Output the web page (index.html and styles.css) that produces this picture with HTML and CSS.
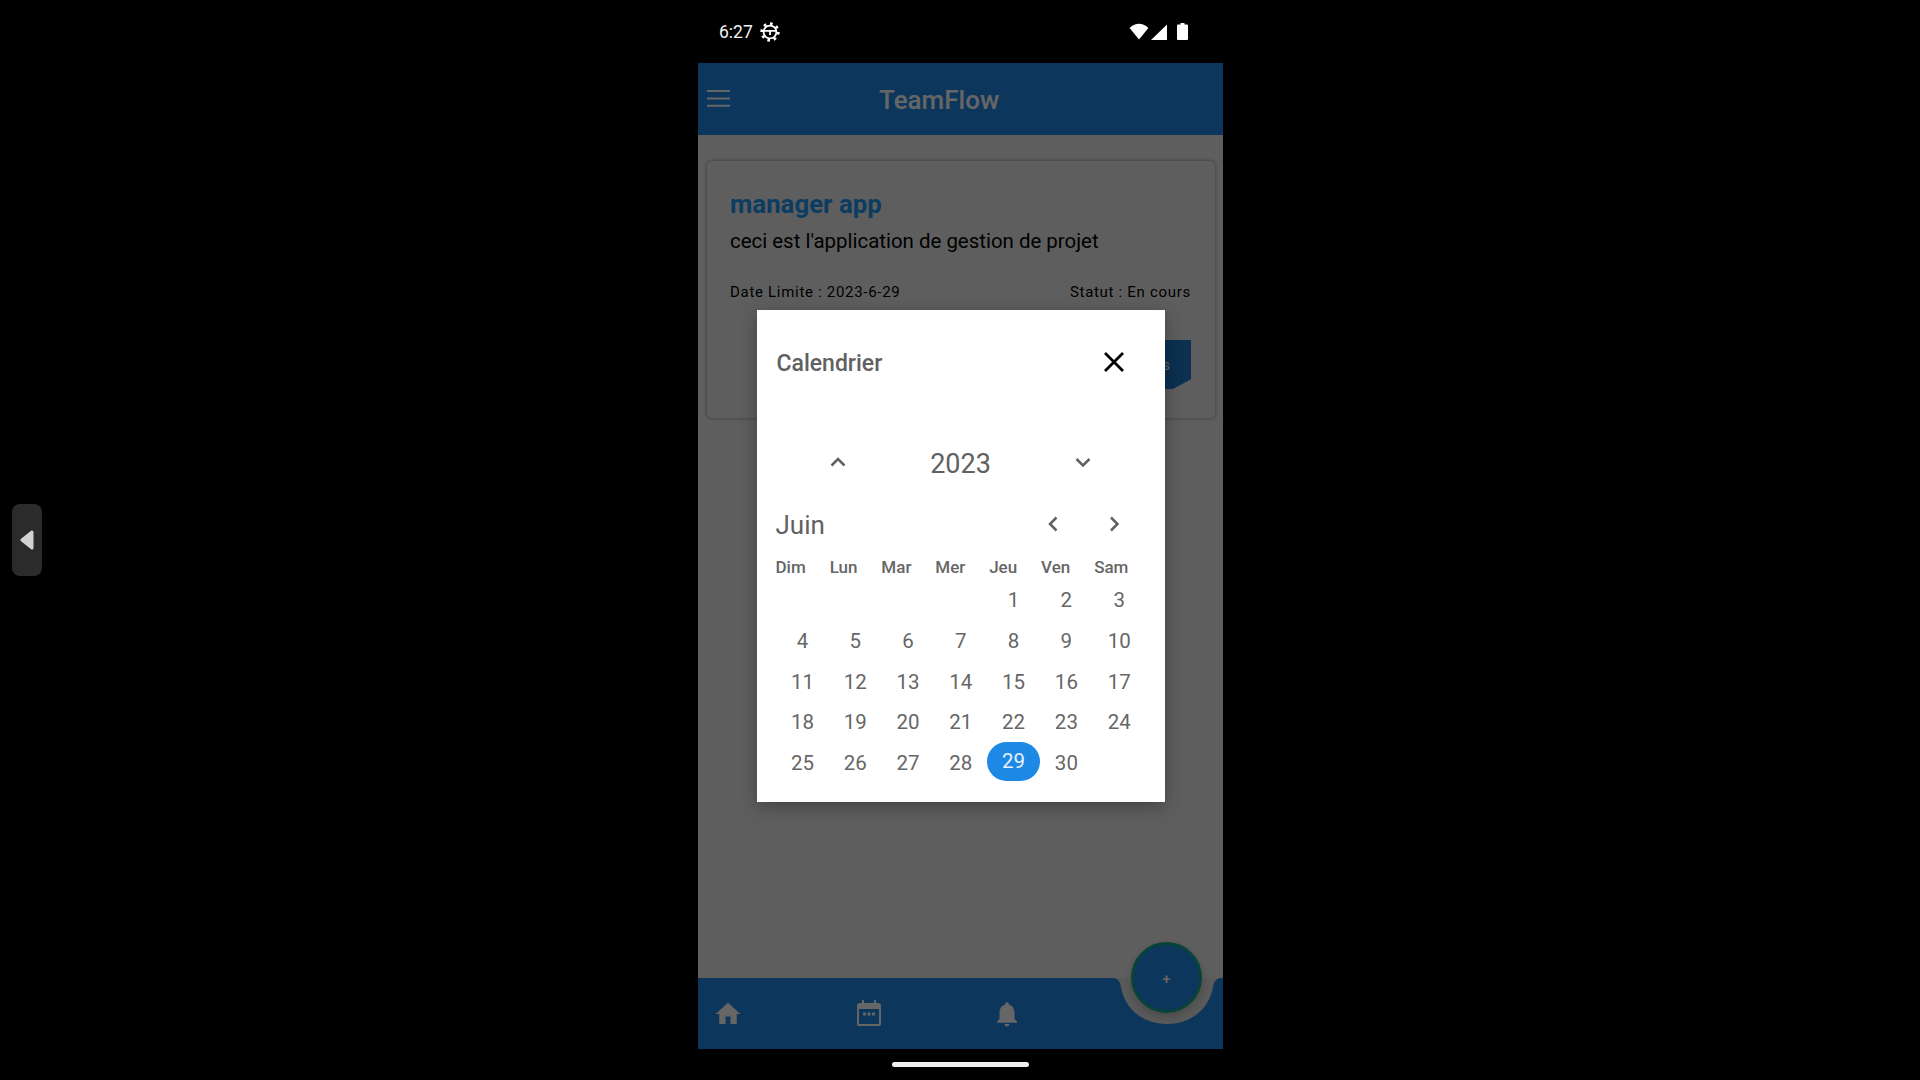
FILE: index.html
```html
<!DOCTYPE html>
<html lang="fr">
<head>
<meta charset="utf-8">
<title>TeamFlow</title>
<link rel="stylesheet" href="styles.css">
</head>
<body>
<div class="side-handle"><svg width="16" height="20" viewBox="0 0 16 20"><path d="M13 2 L3 10 L13 18 Z" class="fill-handle"/></svg></div>
<main class="phone">
  <header class="status">
    <div class="status-left">
      <span class="time">6:27</span>
      <svg class="gear" width="20" height="20" viewBox="0 0 20 20">
        <circle cx="10" cy="10" r="8.2" class="gear-teeth"/>
        <circle cx="10" cy="10" r="6.4" class="gear-ring"/>
        <path d="M4 8.800 H16 M10 8.800 V13" class="gear-ring"/>
      </svg>
    </div>
    <div class="status-right">
      <svg width="20" height="17" viewBox="0 0 20 17"><path d="M0.6 5 Q10 -3.4 19.4 5 L10 16.4 Z" class="fill-white"/></svg>
      <svg width="16" height="16" viewBox="0 0 16 16"><path d="M0 16 L16 0.5 V16 Z" class="fill-white"/></svg>
      <svg class="battery" width="11" height="17" viewBox="0 0 11 17"><path d="M3.5 0 H7.5 V1.5 H10 Q11 1.5 11 2.5 V16 Q11 17 10 17 H1 Q0 17 0 16 V2.5 Q0 1.5 1 1.5 H3.5 Z" class="fill-white"/></svg>
    </div>
  </header>

  <div class="appbar">
    <svg class="menu" width="24" height="17" viewBox="0 0 24 17"><path d="M0 1 H23 M0 8.5 H23 M0 15.8 H23" class="menu-lines"/></svg>
    <h1 class="brand">TeamFlow</h1>
  </div>

  <section class="content">
    <article class="card">
      <h2 class="card-title">manager app</h2>
      <p class="card-desc">ceci est l'application de gestion de projet</p>
      <div class="card-meta"><span>Date Limite : 2023-6-29</span><span>Statut : En cours</span></div>
      <div class="card-actions"><span class="card-btn">Détails</span></div>
    </article>
  </section>

  <nav class="tabbar">
    <svg class="notch" width="110" height="48" viewBox="0 0 110 48"><path d="M0 0 H110 Q102 0 101 9 C97 32 78 46 55 46 C32 46 13 32 9 9 Q8 0 0 0 Z" class="fill-body"/></svg>
    <svg class="tab tab-home" width="30" height="30" viewBox="0 0 24 24"><path d="M10 20v-6h4v6h5v-8h3L12 3 2 12h3v8z" class="fill-icon"/></svg>
    <svg class="tab tab-cal" width="26" height="28" viewBox="0 0 26 28"><path d="M6 1 H8 V4 H18 V1 H20 V4 H22 Q25 4 25 7 V25 Q25 27 23 27 H3 Q1 27 1 25 V7 Q1 4 4 4 H6 Z M3 10 V25 H23 V10 Z" class="fill-icon" fill-rule="evenodd"/><path d="M7 13.5 h3 v3 h-3z M11.5 13.5 h3 v3 h-3z M16 13.5 h3 v3 h-3z" class="fill-icon"/></svg>
    <svg class="tab tab-bell" width="30" height="30" viewBox="0 0 24 24"><path d="M12 22c1.100 0 2-.9 2-2h-4c0 1.100.9 2 2 2zm6-6v-5c0-3.070-1.630-5.640-4.500-6.320V4c0-.83-.67-1.500-1.500-1.500s-1.500.67-1.500 1.500v.68C7.640 5.360 6 7.920 6 11v5l-2 2v1h16v-1l-2-2z" class="fill-icon"/></svg>
    <div class="fab"><span class="fab-plus">+</span></div>
  </nav>

  <div class="gesture"><span class="gesture-bar"></span></div>

  <div class="scrim">
    <div class="modal">
      <div class="modal-head">
        <span class="modal-title">Calendrier</span>
        <svg class="close" width="24" height="24" viewBox="0 0 24 24"><path d="M3 3 L21 21 M21 3 L3 21" class="stroke-black"/></svg>
      </div>
      <div class="year-row">
        <svg width="24" height="24" viewBox="0 0 24 24"><path d="M5.500 15.500 L12 9 L18.500 15.500" class="stroke-gray"/></svg>
        <span class="year">2023</span>
        <svg width="24" height="24" viewBox="0 0 24 24"><path d="M5.500 9 L12 15.500 L18.500 9" class="stroke-gray"/></svg>
      </div>
      <div class="month-row">
        <span class="month">Juin</span>
        <div class="month-nav">
          <svg width="24" height="24" viewBox="0 0 24 24"><path d="M15.500 5.500 L9 12 L15.500 18.500" class="stroke-gray"/></svg>
          <svg width="24" height="24" viewBox="0 0 24 24"><path d="M9 5.500 L15.500 12 L9 18.500" class="stroke-gray"/></svg>
        </div>
      </div>
      <div class="weekdays"><span>Dim</span><span>Lun</span><span>Mar</span><span>Mer</span><span>Jeu</span><span>Ven</span><span>Sam</span></div>
      <div class="days">
        <span></span><span></span><span></span><span></span><span>1</span><span>2</span><span>3</span>
        <span>4</span><span>5</span><span>6</span><span>7</span><span>8</span><span>9</span><span>10</span>
        <span>11</span><span>12</span><span>13</span><span>14</span><span>15</span><span>16</span><span>17</span>
        <span>18</span><span>19</span><span>20</span><span>21</span><span>22</span><span>23</span><span>24</span>
        <span>25</span><span>26</span><span>27</span><span>28</span><span class="day-selected">29</span><span>30</span><span></span>
      </div>
    </div>
  </div>
</main>
</body>
</html>
```
FILE: styles.css
```css
* { box-sizing: border-box; }
html, body { margin: 0; height: 100%; }
body {
  background: #000;
  font-family: Roboto, "Noto Sans", sans-serif;
  display: flex;
  justify-content: center;
  padding-left: 1px;
  overflow: hidden;
}
.side-handle {
  position: absolute;
  left: 12px;
  top: 504px;
  width: 30px;
  height: 72px;
  border-radius: 8px;
  background: #2b2b2b;
  display: flex;
  align-items: center;
  justify-content: center;
}
.fill-handle { fill: #d2d2d2; stroke: #d2d2d2; stroke-width: 3; stroke-linejoin: round; }
.phone {
  position: relative;
  width: 525px;
  height: 1080px;
  display: flex;
  flex-direction: column;
}
.status {
  height: 63px;
  flex: none;
  background: #000;
  display: flex;
  justify-content: space-between;
  align-items: center;
  padding: 0 35px 0 21px;
  color: #fff;
}
.status-left { display: flex; align-items: center; gap: 7px; }
.time { font-size: 17.500px; line-height: 20px; color: #f2f2f2; }
.status-right { display: flex; align-items: center; gap: 2px; }
.battery { margin-left: 8px; }
.fill-white { fill: #fff; }
.gear-teeth { fill: none; stroke: #fff; stroke-width: 3; stroke-dasharray: 2.600 3.800; }
.gear-ring { fill: none; stroke: #fff; stroke-width: 1.800; }
.appbar {
  height: 72px;
  flex: none;
  background: #1e88e5;
  display: flex;
  align-items: center;
  padding-left: 9px;
  gap: 148px;
}
.menu { flex: none; margin-top: -2px; }
.menu-lines { stroke: #fff; stroke-width: 2; fill: none; }
.brand {
  margin: 2px 0 0;
  font-size: 26px;
  font-weight: 500;
  color: #fff;
}
.content {
  flex: 1;
  background: #ececec;
  padding: 26px 8px 0 9px;
}
.card {
  height: 257px;
  background: #ececec;
  border-radius: 5px;
  box-shadow: 0 0 3px 1px #b0b0b0;
  padding: 25px 24px 0 23px;
  display: flex;
  flex-direction: column;
}
.card-title {
  margin: 0;
  font-size: 25.800px;
  line-height: 36px;
  font-weight: 700;
  color: #2196f3;
}
.card-desc {
  margin: 1px 0 0;
  font-size: 20.450px;
  line-height: 36px;
  color: #000;
}
.card-meta {
  margin-top: 23px;
  display: flex;
  justify-content: space-between;
  font-size: 15px;
  line-height: 20px;
  letter-spacing: 0.7px;
  color: #000;
}
.card-actions { margin-top: 38px; display: flex; justify-content: flex-end; }
.card-btn {
  width: 150px;
  height: 49px;
  background: #1e78c8;
  color: #fff;
  font-size: 15px;
  padding-right: 21px;
  display: flex;
  align-items: center;
  justify-content: flex-end;
  clip-path: polygon(0 0, 100% 0, 100% 80%, 88% 100%, 0 100%);
}
.tabbar {
  position: relative;
  height: 71px;
  flex: none;
  background: #1e88e5;
}
.notch { position: absolute; left: 414px; top: 0; }
.fill-body { fill: #e0e0e0; }
.fill-icon { fill: #fff; }
.tab { position: absolute; }
.tab-home { left: 15px; top: 21px; }
.tab-cal { left: 158px; top: 21px; }
.tab-bell { left: 294px; top: 21px; }
.fab {
  position: absolute;
  left: 433px;
  top: -36px;
  width: 71px;
  height: 71px;
  border-radius: 50%;
  background: #1e88e5;
  border: 3px solid #14a98f;
  box-shadow: 0 3px 8px rgba(0, 0, 0, 0.2);
  display: flex;
  align-items: center;
  justify-content: center;
}
.fab-plus { font-size: 15px; font-weight: 500; color: #fff; margin-top: 2px; }
.gesture {
  height: 31px;
  flex: none;
  background: #000;
  display: flex;
  justify-content: center;
  padding-top: 13px;
}
.gesture-bar { width: 137px; height: 5px; border-radius: 3px; background: #f0f0f0; }
.scrim {
  position: absolute;
  left: 0;
  right: 0;
  top: 63px;
  height: 986px;
  display: flex;
  align-items: center;
  justify-content: center;
  background: rgba(0, 0, 0, 0.6);
}
.modal {
  width: 408px;
  height: 492px;
  background: #fff;
  padding: 0 19px;
  color: #616161;
  box-shadow: 0 4px 16px rgba(0, 0, 0, 0.3);
}
.modal-head {
  height: 104px;
  display: flex;
  align-items: center;
  justify-content: space-between;
  padding-right: 20px;
}
.modal-title { font-size: 23px; font-weight: 500; margin: 2px 0 0 1px; }
.stroke-black { stroke: #000; stroke-width: 2.800; fill: none; }
.stroke-gray { stroke: #616161; stroke-width: 2.500; fill: none; }
.year-row {
  margin-top: 26px;
  height: 46px;
  display: flex;
  align-items: center;
  justify-content: space-between;
  padding: 0 50px;
}
.year-row svg { margin-top: -2px; }
.year { font-size: 27px; margin-top: 1px; }
.month-row {
  margin-top: 19px;
  height: 40px;
  display: flex;
  align-items: center;
  justify-content: space-between;
  padding-right: 20px;
}
.month { font-size: 26px; }
.month-nav { display: flex; gap: 37px; margin-top: -2px; }
.weekdays {
  margin-top: 10px;
  height: 24px;
  width: 353px;
  display: flex;
  align-items: center;
  justify-content: space-between;
  font-size: 17px;
  font-weight: 500;
  color: #666;
}
.days {
  display: grid;
  grid-template-columns: repeat(7, 52.800px);
  grid-auto-rows: 40.700px;
  font-size: 20.500px;
  padding-left: 0.500px;
  padding-top: 1px;
  color: #666;
}
.days span {
  display: flex;
  align-items: center;
  justify-content: center;
}
.days .day-selected {
  background: #1e88e5;
  color: #e8f2fc;
  border-radius: 20px;
  height: 39px;
  margin-top: -1px;
}
```
